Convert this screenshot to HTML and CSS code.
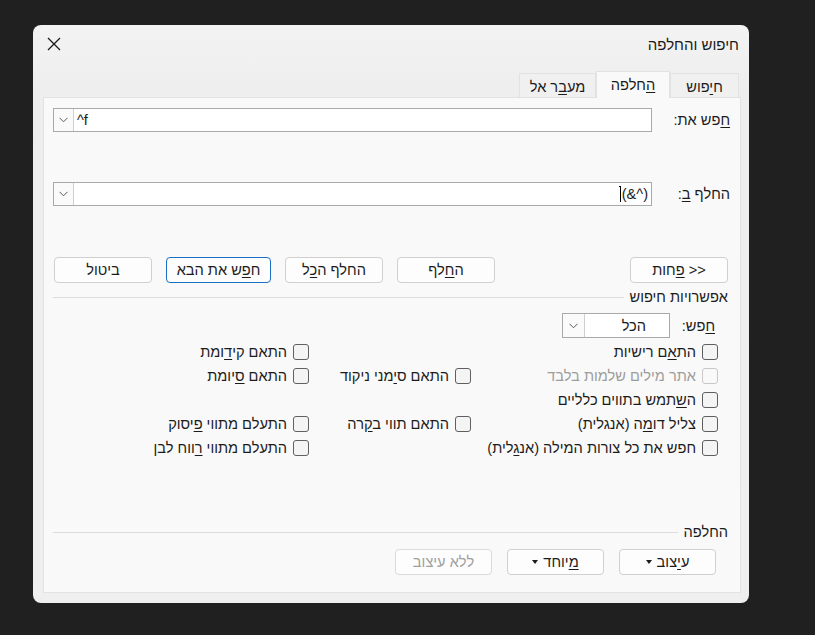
FILE: index.html
```html
<!DOCTYPE html>
<html lang="he">
<head>
<meta charset="utf-8">
<title>חיפוש והחלפה</title>
<link rel="stylesheet" href="styles.css">
</head>
<body>
<div class="dialog" dir="rtl">
  <div class="titlebar">
    <div class="title">חיפוש והחלפה</div>
    <div class="close"><svg width="14" height="14" viewBox="0 0 14 14"><path d="M1 1L13 13M13 1L1 13" stroke="#1a1a1a" stroke-width="1.3" fill="none"/></svg></div>
  </div>
  <div class="tabs">
    <div class="tab"><span>ח<u>י</u>פוש</span></div>
    <div class="tab active"><span><u>ה</u>חלפה</span></div>
    <div class="tab"><span>מע<u>ב</u>ר אל</span></div>
  </div>
  <div class="panel">
    <div class="field-row find-row">
      <div class="field-label"><u>ח</u>פש את:</div>
      <div class="field">
        <div class="field-text ltr">^f</div>
        <div class="drop"><svg width="9" height="6" viewBox="0 0 9 6"><path d="M0.5 0.8L4.5 4.8L8.5 0.8" stroke="#5a5a5a" stroke-width="1" fill="none"/></svg></div>
      </div>
    </div>
    <div class="field-row replace-row">
      <div class="field-label">החלף <u>ב</u>:</div>
      <div class="field">
        <div class="field-text rtl-text"><span class="caret"></span><span class="typed">(&amp;^)</span></div>
        <div class="drop"><svg width="9" height="6" viewBox="0 0 9 6"><path d="M0.5 0.8L4.5 4.8L8.5 0.8" stroke="#5a5a5a" stroke-width="1" fill="none"/></svg></div>
      </div>
    </div>
    <div class="button-row">
      <div class="btn"><span>&lt;&lt; <u>פ</u>חות</span></div>
      <div class="spacer"></div>
      <div class="btn"><span>ה<u>ח</u>לף</span></div>
      <div class="btn"><span>החלף ה<u>כ</u>ל</span></div>
      <div class="btn default"><span>ח<u>פ</u>ש את הבא</span></div>
      <div class="btn"><span>ביטול</span></div>
    </div>
    <div class="section-sep options-sep"><span class="sep-label">אפשרויות חיפוש</span><span class="sep-line"></span></div>
    <div class="search-row">
      <div class="search-label"><u>ח</u>פש:</div>
      <div class="combo">
        <div class="combo-text">הכל</div>
        <div class="drop"><svg width="9" height="6" viewBox="0 0 9 6"><path d="M0.5 0.8L4.5 4.8L8.5 0.8" stroke="#5a5a5a" stroke-width="1" fill="none"/></svg></div>
      </div>
    </div>
    <div class="options">
      <div class="opt"><span class="cb"></span><span>הת<u>א</u>ם רישיות</span></div>
      <div class="opt empty"></div>
      <div class="opt"><span class="cb"></span><span>התאם קי<u>ד</u>ומת</span></div>

      <div class="opt disabled"><span class="cb"></span><span>אתר מילים שלמות בלבד</span></div>
      <div class="opt"><span class="cb"></span><span>התאם ס<u>י</u>מני ניקוד</span></div>
      <div class="opt"><span class="cb"></span><span>התאם <u>ס</u>יומת</span></div>

      <div class="opt"><span class="cb"></span><span>ה<u>ש</u>תמש בתווים כלליים</span></div>
      <div class="opt empty"></div>
      <div class="opt empty"></div>

      <div class="opt"><span class="cb"></span><span>צליל דו<u>מ</u>ה (אנגלית)</span></div>
      <div class="opt"><span class="cb"></span><span>התאם תווי ב<u>ק</u>רה</span></div>
      <div class="opt"><span class="cb"></span><span>התעלם מתווי <u>פ</u>יסוק</span></div>

      <div class="opt"><span class="cb"></span><span>חפש את כל צורות המילה (אנ<u>ג</u>לית)</span></div>
      <div class="opt empty"></div>
      <div class="opt"><span class="cb"></span><span>התעלם מתווי <u>ר</u>ווח לבן</span></div>
    </div>
    <div class="section-sep replace-sep"><span class="sep-label">החלפה</span><span class="sep-line"></span></div>
    <div class="bottom-row">
      <div class="btn small"><span>ע<u>י</u>צוב</span><span class="arrow"></span></div>
      <div class="btn small"><span><u>מ</u>יוחד</span><span class="arrow"></span></div>
      <div class="btn small disabled"><span>ללא עיצוב</span></div>
    </div>
  </div>
</div>
</body>
</html>
```

FILE: styles.css
```css
html, body {
  margin: 0;
  padding: 0;
  background: #202020;
  height: 100%;
}
body {
  font-family: "Liberation Sans", "DejaVu Sans", sans-serif;
  font-size: 14.6px;
  color: #1c1c1c;
  overflow: hidden;
}
u {
  text-decoration-thickness: 1px;
  text-underline-offset: 2px;
}
.dialog {
  margin: 25px 0 0 33px;
  width: 716px;
  height: 578px;
  background: #f0f0f0;
  border-radius: 8px;
  display: flex;
  flex-direction: column;
  box-sizing: border-box;
  background-image: linear-gradient(#f3f3f3, #eeeeee 60px, #efefef);
}
.titlebar {
  height: 38px;
  display: flex;
  align-items: center;
  justify-content: space-between;
  padding: 0 10px 0 14px;
}
.title {
  font-size: 15px;
  color: #1a1a1a;
}
.close {
  width: 14px;
  height: 14px;
  display: flex;
}
.tabs {
  margin-top: 8px;
  height: 26px;
  display: flex;
  align-items: flex-end;
  padding-right: 10px;
  position: relative;
  z-index: 2;
}
.tab {
  height: 24px;
  box-sizing: border-box;
  border: 1px solid #e2e2e2;
  border-bottom: none;
  background: #f0f0f0;
  display: flex;
  align-items: center;
  justify-content: center;
  padding-top: 2px;
  width: 77px;
}
.tab:first-child { width: 69px; }
.tab.active {
  height: 27px;
  width: 74px;
  background: #f9f9f9;
  margin-bottom: -1px;
  border-color: #e2e2e2;
  padding-top: 0;
}
.panel {
  flex: 1;
  margin: 0 8px 10px 10px;
  background: #f9f9f9;
  border: 1px solid #e2e2e2;
  display: flex;
  flex-direction: column;
  position: relative;
  z-index: 1;
}
.field-row {
  display: flex;
  align-items: center;
  height: 24px;
  padding: 0 10px 0 9px;
}
.find-row { margin-top: 10px; }
.replace-row { margin-top: 50px; }
.field-label {
  flex: 0 0 78px;
}
.field {
  flex: 1;
  height: 24px;
  box-sizing: border-box;
  border: 1px solid #a9a9a9;
  background: #fff;
  display: flex;
}
.field-text {
  flex: 1;
  display: flex;
  align-items: center;
  padding: 0 3px;
}
.field-text.ltr {
  direction: ltr;
  justify-content: flex-start;
}
.rtl-text {
  direction: ltr;
  justify-content: flex-end;
}
.typed {
  unicode-bidi: bidi-override;
  direction: ltr;
}
.caret {
  width: 2px;
  height: 16px;
  border-right: 1px solid #000;
  border-top: 1px solid #000;
  box-sizing: border-box;
  margin-right: 1px;
}
.drop {
  width: 20px;
  box-sizing: border-box;
  border-right: 1px solid #cfcfcf;
  background: #fafafa;
  display: flex;
  align-items: center;
  justify-content: center;
}
.button-row {
  margin-top: 51px;
  height: 26px;
  display: flex;
  padding: 0 12px 0 10px;
  gap: 14px;
}
.spacer { flex: 1; }
.btn {
  width: 98px;
  height: 26px;
  box-sizing: border-box;
  border: 1px solid #d0d0d0;
  border-radius: 4px;
  background: #fdfdfd;
  display: flex;
  align-items: center;
  justify-content: center;
  white-space: nowrap;
}
.btn.default {
  width: 105px;
  border-color: #1a6fc4;
}
.section-sep {
  display: flex;
  align-items: center;
  padding: 0 12px 0 9px;
  gap: 6px;
  height: 16px;
}
.options-sep { margin-top: 6px; }
.sep-line {
  flex: 1;
  height: 1px;
  background: #dcdcdc;
}
.search-row {
  margin-top: 8px;
  display: flex;
  align-items: center;
  height: 25px;
  padding-right: 25px;
}
.search-label {
  width: 45px;
}
.combo {
  width: 108px;
  height: 25px;
  box-sizing: border-box;
  border: 1px solid #a9a9a9;
  background: #fff;
  display: flex;
}
.combo-text {
  flex: 1;
  display: flex;
  align-items: center;
  padding-right: 23px;
}
.combo .drop { width: 22px; }
.options {
  margin-top: 2px;
  display: grid;
  grid-template-columns: 247px 162px 1fr;
  grid-auto-rows: 24px;
  padding-right: 22px;
}
.opt {
  display: flex;
  align-items: center;
  gap: 6px;
  white-space: nowrap;
}
.cb {
  width: 16px;
  height: 16px;
  box-sizing: border-box;
  border: 1px solid #5f5f5f;
  border-radius: 3px;
  background: #f4f4f4;
  flex: 0 0 auto;
}
.opt.disabled { color: #9d9d9d; }
.opt.disabled .cb { border-color: #c8c8c8; background: #f9f9f9; }
.replace-sep { margin-top: 64px; }
.bottom-row {
  margin-top: 9px;
  display: flex;
  gap: 15px;
  padding-right: 24px;
}
.btn.small { width: 97px; }
.btn.disabled { color: #a0a0a0; border-color: #dadada; }
.arrow {
  width: 0;
  height: 0;
  border-left: 3px solid transparent;
  border-right: 3px solid transparent;
  border-top: 4px solid #1a1a1a;
  margin-right: 5px;
}
```
